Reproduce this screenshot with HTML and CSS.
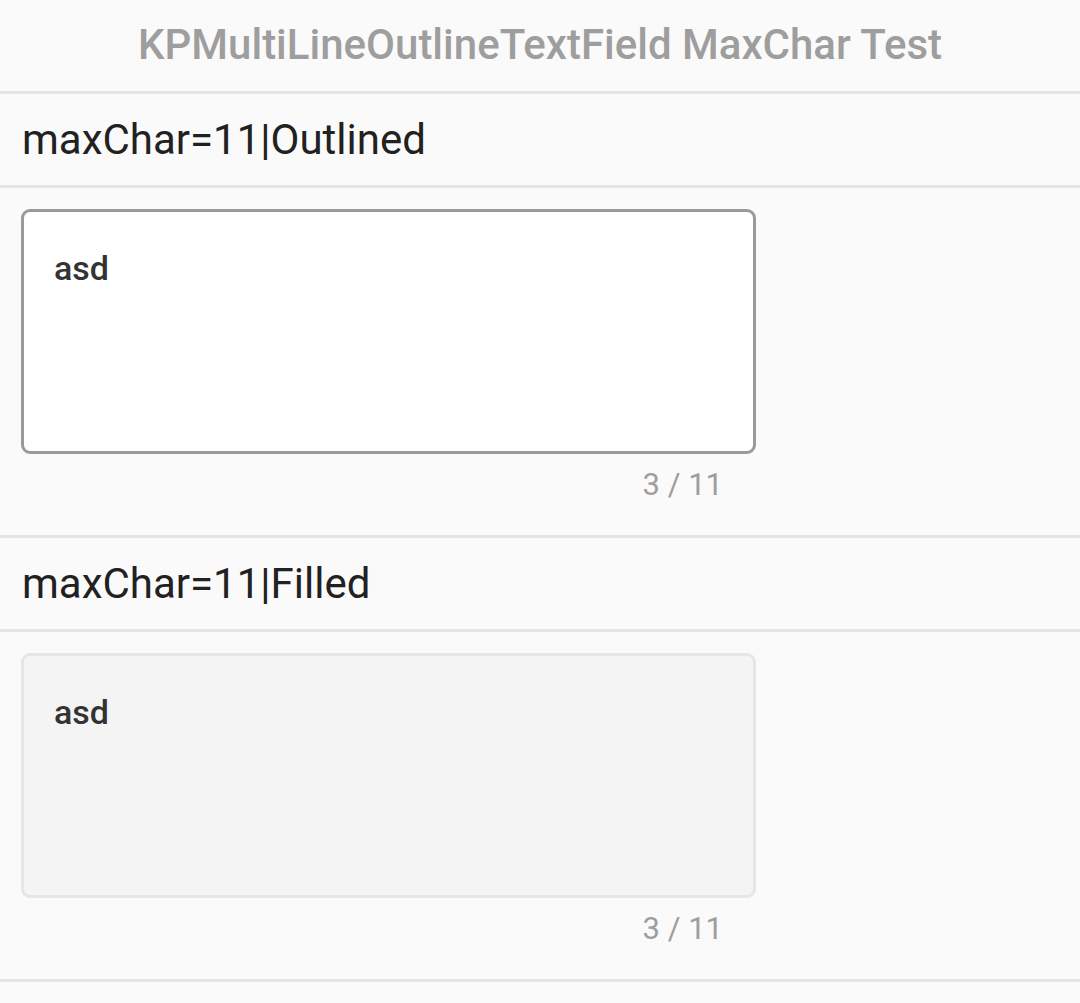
FILE: index.html
```html
<!DOCTYPE html>
<html>
<head>
<meta charset="utf-8">
<link rel="stylesheet" href="styles.css">
</head>
<body>
<div class="page">
  <header class="title-bar">KPMultiLineOutlineTextField MaxChar Test</header>
  <div class="divider"></div>

  <div class="section-head">maxChar=11|Outlined</div>
  <div class="divider"></div>
  <div class="section-body">
    <div class="field field-outlined"><span class="field-text">asd</span></div>
    <div class="counter">3 / 11</div>
  </div>
  <div class="divider"></div>

  <div class="section-head">maxChar=11|Filled</div>
  <div class="divider"></div>
  <div class="section-body">
    <div class="field field-filled"><span class="field-text">asd</span></div>
    <div class="counter">3 / 11</div>
  </div>
  <div class="divider"></div>
</div>
</body>
</html>
```
FILE: styles.css
```css
html, body {
  margin: 0;
  padding: 0;
  background: #fafafa;
}
body {
  font-family: Roboto, "Noto Sans", sans-serif;
}
.page {
  display: flex;
  flex-direction: column;
  width: 1080px;
  min-height: 1003px;
  background: #fafafa;
}
.title-bar {
  height: 91px;
  display: flex;
  align-items: center;
  justify-content: center;
  font-size: 42px;
  font-weight: 500;
  color: #9e9e9e;
  line-height: 1;
  padding-bottom: 2px;
  box-sizing: border-box;
}
.divider {
  height: 3px;
  background: #e5e5e5;
}
.section-head {
  height: 91px;
  display: flex;
  align-items: center;
  padding-left: 22px;
  font-size: 42px;
  font-weight: 400;
  color: #212121;
  line-height: 1;
}
.section-body {
  height: 347px;
  box-sizing: border-box;
  padding: 21px 0 0 21px;
}
.field {
  width: 735px;
  height: 245px;
  box-sizing: border-box;
  border-radius: 9px;
  padding: 39px 0 0 30px;
}
.field-outlined {
  background: #ffffff;
  border: 3px solid #9a9a9a;
}
.field-filled {
  background: #f4f4f4;
  border: 3px solid #e6e6e6;
}
.field-text {
  font-size: 34px;
  font-weight: 500;
  color: #333333;
  line-height: 1;
}
.counter {
  width: 735px;
  box-sizing: border-box;
  text-align: right;
  padding-right: 33px;
  padding-top: 15px;
  font-size: 31px;
  color: #9e9e9e;
  line-height: 1;
}
```
